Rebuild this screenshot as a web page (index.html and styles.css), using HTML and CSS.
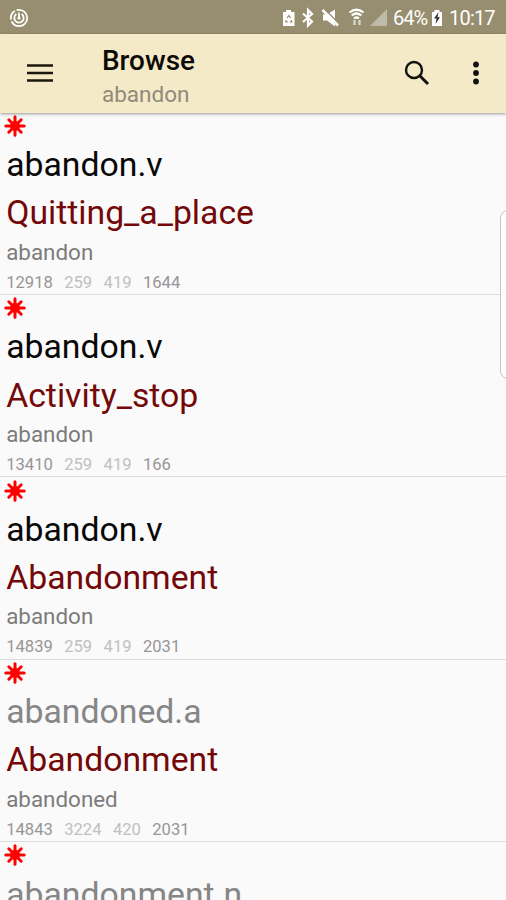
FILE: index.html
```
<!DOCTYPE html>
<html lang="en">
<head>
<meta charset="utf-8">
<title>Browse</title>
<link rel="stylesheet" href="styles.css">
</head>
<body>
<svg class="defs" width="0" height="0">
	<symbol id="star" viewBox="0 0 22 22">
		<path d="M11 1.800v18.400M1.800 11h18.400M4.800 4.800l12.400 12.400M17.200 4.800L4.800 17.200" fill="none" stroke="#f00" stroke-width="3" stroke-linecap="round"/>
		<circle cx="11" cy="11" r="5" fill="#f00"/>
	</symbol>
</svg>

<div class="status">
	<svg class="app" width="20" height="20" viewBox="0 0 20 20" fill="none" stroke="#fff">
		<circle cx="10" cy="10" r="8.2" stroke-width="1.8" stroke-dasharray="22 2 10 2"/>
		<path d="M7.400 6A4.700 4.700 0 1 0 12.600 6" stroke-width="1.8"/>
		<path d="M10 4.500v5.700" stroke-width="1.7"/>
		<circle cx="10" cy="10" r="1.6" fill="#fff" stroke="none"/>
	</svg>
	<svg class="tray" width="106" height="22" viewBox="282 7 106 22" fill="#fff">
		<path d="M286 10h5v2h3.500v14h-11.500v-14h3z"/>
		<path d="M287 18l1.800-2.500 1.800 2.500M286.300 20l-.5 2h2.200M291.200 20l.6 2h-2.200" fill="none" stroke="#968e6f" stroke-width="1.200"/>
		<path d="M303 13.500l9 8-4 4V10l4 4-9 8" fill="none" stroke="#fff" stroke-width="2.200"/>
		<path d="M323 14.500h4l8-5v17l-8-6h-4z"/>
		<path d="M323.500 8l16 16" fill="none" stroke="#968e6f" stroke-width="1.500"/>
		<path d="M322.500 10l15.500 15.500" fill="none" stroke="#fff" stroke-width="2.500"/>
		<path d="M349.500 12.500q7-5.500 14 0M351.700 15.500q4.800-4 9.600 0M354 18.500q2.500-2 5 0" fill="none" stroke="#fff" stroke-width="2.200"/>
		<path d="M354.500 25v-5M359.500 20v5" fill="none" stroke="#d8d4c8" stroke-width="2.400"/>
		<path d="M387 9v17h-17z" fill="#c0bba8"/>
	</svg>
	<span class="percent">64%</span>
	<svg class="battery" width="12" height="18" viewBox="0 0 12 18">
		<path d="M3.500 1h5v2H11v14H1V3h2.500z" fill="#fff"/>
		<path d="M7.500 3L3 9.500h2.500L4.500 15 9 8.300H6.600z" fill="#333"/>
	</svg>
	<span class="clock">10:17</span>
</div>

<div class="toolbar">
	<svg class="menu" width="26" height="20" viewBox="0 0 26 20">
		<path d="M0 2.500h26M0 10h26M0 17.500h26" stroke="#1a170e" stroke-width="2.300"/>
	</svg>
	<div class="titles">
		<div class="title">Browse</div>
		<div class="subtitle">abandon</div>
	</div>
	<svg class="search" width="26" height="26" viewBox="0 0 26 26" fill="none" stroke="#111">
		<circle cx="10" cy="10" r="8" stroke-width="2.400"/>
		<path d="M15.800 15.800l8.200 8.200" stroke-width="3"/>
	</svg>
	<svg class="more" width="8" height="26" viewBox="0 0 8 26" fill="#111">
		<circle cx="4" cy="4.500" r="2.900"/>
		<circle cx="4" cy="13" r="2.900"/>
		<circle cx="4" cy="21.500" r="2.900"/>
	</svg>
</div>

<div class="list">
	<div class="item">
		<svg class="star"><use href="#star"/></svg>
		<div class="lexunit">abandon.v</div>
		<div class="frame">Quitting_a_place</div>
		<div class="word">abandon</div>
		<div class="ids"><span>12918</span><span class="light">259</span><span class="light">419</span><span>1644</span></div>
	</div>
	<div class="item">
		<svg class="star"><use href="#star"/></svg>
		<div class="lexunit">abandon.v</div>
		<div class="frame">Activity_stop</div>
		<div class="word">abandon</div>
		<div class="ids"><span>13410</span><span class="light">259</span><span class="light">419</span><span>166</span></div>
	</div>
	<div class="item">
		<svg class="star"><use href="#star"/></svg>
		<div class="lexunit">abandon.v</div>
		<div class="frame">Abandonment</div>
		<div class="word">abandon</div>
		<div class="ids"><span>14839</span><span class="light">259</span><span class="light">419</span><span>2031</span></div>
	</div>
	<div class="item">
		<svg class="star"><use href="#star"/></svg>
		<div class="lexunit other">abandoned.a</div>
		<div class="frame">Abandonment</div>
		<div class="word">abandoned</div>
		<div class="ids"><span>14843</span><span class="light">3224</span><span class="light">420</span><span>2031</span></div>
	</div>
	<div class="item">
		<svg class="star"><use href="#star"/></svg>
		<div class="lexunit other">abandonment.n</div>
	</div>
</div>

<!-- edge panel handle -->
<div class="handle"></div>
</body>
</html>
```
FILE: styles.css
```
* {
	box-sizing: border-box;
}
body {
	margin: 0;
	height: 900px;
	overflow: hidden;
	position: relative;
	display: flex;
	flex-direction: column;
	background: #fafafa;
	font-family: Roboto, sans-serif;
}
svg {
	display: block;
	flex: none;
}
.defs {
	position: absolute;
}

/* status bar */
.status {
	height: 34px;
	flex: none;
	display: flex;
	align-items: center;
	padding: 2px 11px 0 9px;
	background: #968e6f;
	color: #fff;
	font-size: 20px;
	line-height: 32px;
}
.app {
	margin-top: -1px;
}
.tray {
	margin-left: auto;
}
.percent {
	width: 35px;
	margin-left: 5px;
	letter-spacing: -1px;
}
.battery {
	margin-left: 3px;
}
.clock {
	width: 46px;
	margin-left: 6px;
	letter-spacing: -0.8px;
	white-space: nowrap;
}

/* toolbar */
.toolbar {
	height: 79px;
	flex: none;
	display: flex;
	align-items: center;
	padding: 0 26px 1px 27px;
	background: #f4eac7;
	box-shadow: 0 1px 3px rgba(0, 0, 0, 0.4);
	z-index: 1;
}
.titles {
	margin-left: 49px;
	padding-top: 6px;
	flex: 1;
}
.title {
	font-size: 27.9px;
	font-weight: 500;
	line-height: 36px;
	color: #0c0b08;
}
.subtitle {
	font-size: 22.5px;
	line-height: 31px;
	color: #8f8a7b;
}
.search {
	margin-right: 42px;
}

/* list */
.list {
	flex: 1;
	min-height: 0;
	overflow: hidden;
	margin-top: -0.6px;
}
.item {
	height: 182.4px;
	padding: 2.5px 0 0 6.2px;
	border-bottom: 1px solid #dcdcdc;
}
.star {
	width: 22px;
	height: 22px;
	margin: 0 0 4.1px -2.2px;
}
.lexunit,
.frame {
	font-size: 33.75px;
	line-height: 48.3px;
	color: #080808;
}
.lexunit.other {
	color: #868686;
}
.frame {
	color: #740808;
}
.word {
	font-size: 22.4px;
	line-height: 29px;
	color: #7c7c7c;
}
.ids {
	display: flex;
	gap: 11.4px;
	font-size: 16.6px;
	line-height: 31px;
	color: #969696;
}
.ids .light {
	color: #c0c0c0;
}

.handle {
	position: absolute;
	top: 210px;
	right: -10px;
	width: 16px;
	height: 169px;
	border: 1px solid #c4c4c4;
	border-radius: 9px;
	background: rgba(255, 255, 255, 0.7);
}
```
